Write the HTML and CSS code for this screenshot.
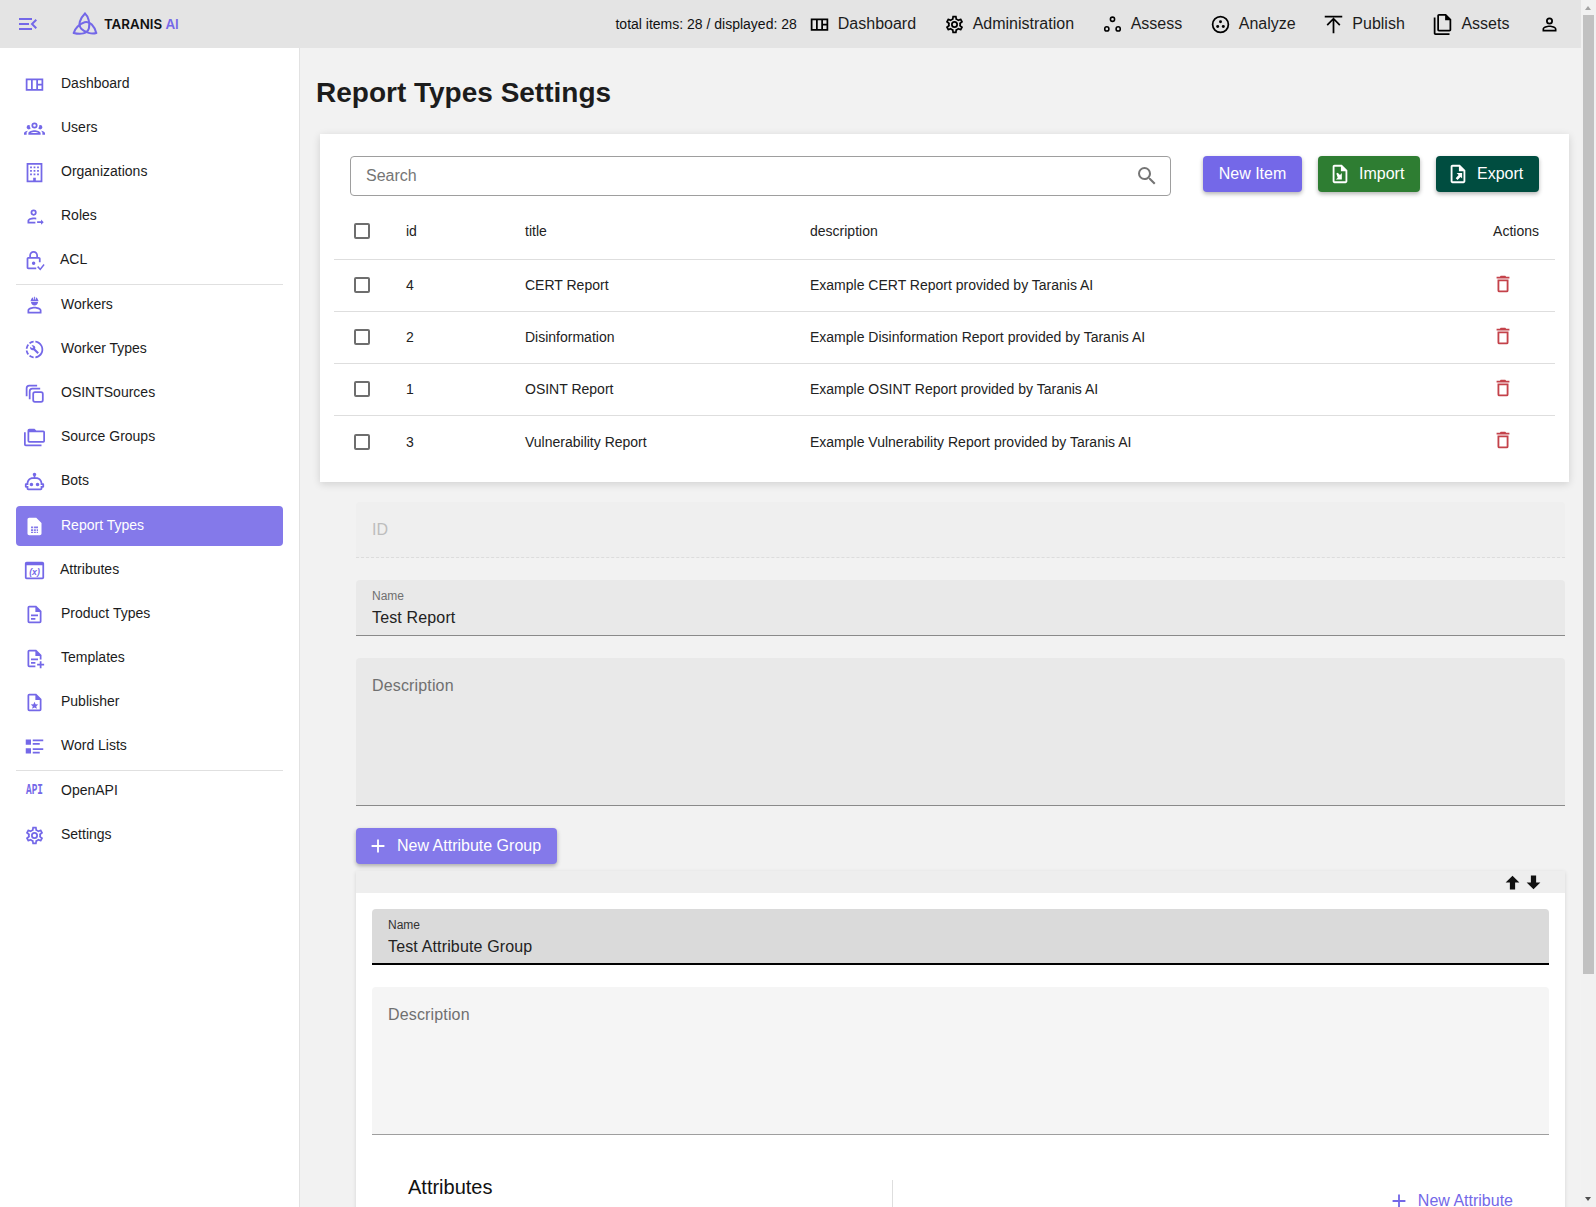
FILE: index.html
```html
<!DOCTYPE html>
<html>
<head>
    <title>Report Types Settings</title>
    <link rel="stylesheet" href="styles.css">
</head>
<body>
    <header class="app-bar">
        <button class="menu-toggle" aria-label="menu">
            <svg viewBox="0 0 24 24" class="icon primary"><path d="M21,15.61L19.59,17L14.58,12L19.59,7L21,8.39L17.44,12L21,15.61M3,6H16V8H3V6M3,13V11H13V13H3M3,18V16H16V18H3Z"/></svg>
        </button>
        <div class="logo">
            <svg viewBox="0 0 26 24" class="logo-mark"><g fill="none" stroke="#7468e8" stroke-width="2" stroke-linecap="round"><path d="M13 1.500C8 6.500 5.500 13 9.500 17C13 20.500 20 22.500 24.260 21"/><path d="M13 1.500C8 6.500 5.500 13 9.500 17C13 20.500 20 22.500 24.260 21" transform="rotate(120 13 14.500)"/><path d="M13 1.500C8 6.500 5.500 13 9.500 17C13 20.500 20 22.500 24.260 21" transform="rotate(240 13 14.500)"/></g></svg>
            <span class="logo-text">TARANIS <span class="logo-ai">AI</span></span>
        </div>
        <div class="bar-spacer"></div>
        <span class="item-count">total items: 28 / displayed: 28</span>
        <nav class="top-nav">
            <a class="top-link"><svg viewBox="0 0 24 24" class="icon"><path d="M2 5H22V19H2V5M4 7V17H8V7H4M10 7V17H14V7H10M16 7V11H20V7H16M16 13V17H20V13H16Z" fill-rule="evenodd"/></svg>Dashboard</a>
            <a class="top-link"><svg viewBox="0 0 24 24" class="icon"><path d="M12,8A4,4 0 0,1 16,12A4,4 0 0,1 12,16A4,4 0 0,1 8,12A4,4 0 0,1 12,8M12,10A2,2 0 0,0 10,12A2,2 0 0,0 12,14A2,2 0 0,0 14,12A2,2 0 0,0 12,10M10,22C9.75,22 9.54,21.82 9.5,21.58L9.13,18.93C8.5,18.68 7.96,18.34 7.44,17.94L4.95,18.95C4.73,19.03 4.46,18.95 4.34,18.73L2.34,15.27C2.21,15.05 2.27,14.78 2.46,14.63L4.57,12.97L4.5,12L4.57,11L2.46,9.37C2.27,9.22 2.21,8.95 2.34,8.73L4.34,5.27C4.46,5.05 4.73,4.96 4.95,5.05L7.44,6.05C7.96,5.66 8.5,5.32 9.13,5.07L9.5,2.42C9.54,2.18 9.75,2 10,2H14C14.25,2 14.46,2.18 14.5,2.42L14.87,5.07C15.5,5.32 16.04,5.66 16.56,6.05L19.05,5.05C19.27,4.96 19.54,5.05 19.66,5.27L21.66,8.73C21.79,8.95 21.73,9.22 21.54,9.37L19.43,11L19.5,12L19.43,13L21.54,14.63C21.73,14.78 21.79,15.05 21.66,15.27L19.66,18.73C19.54,18.95 19.27,19.04 19.05,18.95L16.56,17.95C16.04,18.34 15.5,18.68 14.87,18.93L14.5,21.58C14.46,21.82 14.25,22 14,22H10M11.25,4L10.88,6.61C9.68,6.86 8.62,7.5 7.85,8.39L5.44,7.35L4.69,8.65L6.8,10.2C6.4,11.37 6.4,12.64 6.8,13.8L4.68,15.36L5.43,16.66L7.86,15.62C8.63,16.5 9.68,17.14 10.87,17.38L11.24,20H12.76L13.13,17.39C14.32,17.14 15.37,16.5 16.14,15.62L18.57,16.66L19.32,15.36L17.2,13.81C17.6,12.64 17.6,11.37 17.2,10.2L19.31,8.65L18.56,7.35L16.15,8.39C15.38,7.5 14.32,6.86 13.12,6.62L12.75,4H11.25Z"/></svg>Administration</a>
            <a class="top-link"><svg viewBox="0 0 24 24" class="icon"><g fill="none" stroke="#000" stroke-width="1.800"><circle cx="12" cy="6" r="2.400"/><circle cx="5.500" cy="17" r="2.400"/><circle cx="18.500" cy="17" r="2.400"/></g></svg>Assess</a>
            <a class="top-link"><svg viewBox="0 0 24 24" class="icon"><circle cx="12" cy="12" r="9" fill="none" stroke="#000" stroke-width="2"/><circle cx="12" cy="8.800" r="1.700"/><circle cx="8.800" cy="14.300" r="1.700"/><circle cx="15.200" cy="14.300" r="1.700"/></svg>Analyze</a>
            <a class="top-link"><svg viewBox="0 0 24 24" class="icon"><path d="M4.08,11.92L12,4L19.92,11.92L18.5,13.33L13,7.83V22H11V7.83L5.5,13.33L4.08,11.92M12,4H22V2H2V4H12Z"/></svg>Publish</a>
            <a class="top-link"><svg viewBox="0 0 24 24" class="icon"><path d="M16 0H8C6.9 0 6 .9 6 2V18C6 19.100 6.900 20 8 20H20C21.100 20 22 19.100 22 18V6L16 0M20 18H8V2H15V7H20V18M4 4V22H20V24H4C2.900 24 2 23.100 2 22V4H4Z"/></svg>Assets</a>
            <a class="top-link top-user"><svg viewBox="0 0 24 24" class="icon"><path d="M12,4A4,4 0 0,1 16,8A4,4 0 0,1 12,12A4,4 0 0,1 8,8A4,4 0 0,1 12,4M12,6A2,2 0 0,0 10,8A2,2 0 0,0 12,10A2,2 0 0,0 14,8A2,2 0 0,0 12,6M12,13C14.67,13 20,14.33 20,17V20H4V17C4,14.33 9.33,13 12,13M12,14.9C9.03,14.9 5.9,16.36 5.9,17V18.1H18.1V17C18.1,16.36 14.97,14.9 12,14.9Z"/></svg></a>
        </nav>
    </header>

    <aside class="sidebar">
        <a class="nav-item"><svg viewBox="0 0 24 24" class="icon primary"><path d="M2 5H22V19H2V5M4 7V17H8V7H4M10 7V17H14V7H10M16 7V11H20V7H16M16 13V17H20V13H16Z" fill-rule="evenodd"/></svg><span>Dashboard</span></a>
        <a class="nav-item"><svg viewBox="0 0 24 24" class="icon primary"><path d="M12,5A3.5,3.5 0 0,0 8.5,8.5A3.5,3.5 0 0,0 12,12A3.5,3.5 0 0,0 15.5,8.5A3.5,3.5 0 0,0 12,5M12,7A1.5,1.5 0 0,1 13.5,8.5A1.5,1.5 0 0,1 12,10A1.5,1.5 0 0,1 10.5,8.5A1.5,1.5 0 0,1 12,7M5.5,8A2.5,2.5 0 0,0 3,10.5C3,11.44 3.53,12.25 4.29,12.68C4.65,12.88 5.06,13 5.5,13C5.94,13 6.35,12.88 6.71,12.68C7.08,12.47 7.39,12.17 7.62,11.81C6.89,10.86 6.5,9.7 6.5,8.5C6.5,8.41 6.5,8.31 6.5,8.22C6.2,8.08 5.86,8 5.5,8M18.5,8C18.14,8 17.8,8.08 17.5,8.22C17.5,8.31 17.5,8.41 17.5,8.5C17.5,9.7 17.11,10.86 16.38,11.81C16.5,12 16.63,12.15 16.78,12.3C16.94,12.45 17.11,12.58 17.29,12.68C17.65,12.88 18.06,13 18.5,13C18.94,13 19.35,12.88 19.71,12.68C20.47,12.25 21,11.44 21,10.5A2.5,2.5 0 0,0 18.5,8M12,14C9.66,14 5,15.17 5,17.5V19H19V17.5C19,15.17 14.34,14 12,14M4.71,14.55C2.78,14.78 0,15.76 0,17.5V19H3V17.07C3,16.06 3.69,15.22 4.71,14.55M19.29,14.55C20.31,15.22 21,16.06 21,17.07V19H24V17.5C24,15.76 21.22,14.78 19.29,14.55M12,16C13.53,16 15.24,16.5 16.23,17H7.77C8.76,16.5 10.47,16 12,16Z"/></svg><span>Users</span></a>
        <a class="nav-item"><svg viewBox="0 0 24 24" class="icon primary"><path fill-rule="evenodd" d="M3 1H21V23H3V1M5 3V21H10.500V18H13.500V21H19V3H5M7 5H9V7H7V5M11 5H13V7H11V5M15 5H17V7H15V5M7 9H9V11H7V9M11 9H13V11H11V9M15 9H17V11H15V9M7 13H9V15H7V13M11 13H13V15H11V13M15 13H17V15H15V13Z"/></svg><span>Organizations</span></a>
        <a class="nav-item"><svg viewBox="0 0 24 24" class="icon primary"><path d="M11 4A3.500 3.500 0 1 1 11 11A3.500 3.500 0 1 1 11 4M11 6A1.500 1.500 0 1 0 11 9A1.500 1.500 0 1 0 11 6M11 13C11.900 13 13 13.100 14 13.400V15.400C13 15.100 11.900 15 11 15C8.500 15 6 16 6 16.800V18H13V20H4V16.800C4 14.300 8.500 13 11 13M15 17.500H19.500V15.500L22.500 18.500L19.500 21.500V19.500H15V17.500Z"/></svg><span>Roles</span></a>
        <a class="nav-item nav-tight"><svg viewBox="0 0 24 24" class="icon primary"><path fill-rule="evenodd" d="M11 1C8.200 1 6 3.200 6 6V8H5C3.900 8 3 8.900 3 10V20C3 21.100 3.900 22 5 22H14V20H5V10H17V14H19V10C19 8.900 18.100 8 17 8H16V6C16 3.200 13.800 1 11 1M11 3C12.700 3 14 4.300 14 6V8H8V6C8 4.300 9.300 3 11 3M11 13A2 2 0 1 0 11 17A2 2 0 1 0 11 13M22.300 16L18.500 20.800L16.200 18.400L15 19.600L18.600 23.300L23.600 17.100L22.300 16Z"/></svg><span>ACL</span></a>
        <hr class="nav-divider">
        <a class="nav-item"><svg viewBox="0 0 24 24" class="icon primary"><path d="M12 13.500C9.300 13.500 4 14.800 4 17.500V21H20V17.500C20 14.800 14.700 13.500 12 13.500M18 19H6V17.500C6 16.800 9.200 15.500 12 15.500S18 16.800 18 17.500V19M8 8C8 10.200 9.800 12 12 12S16 10.200 16 8H8M7.500 7H16.500V6H16C16 4.500 15 3.300 13.500 2.700V5H12.500V2H11.500V5H10.500V2.700C9 3.300 8 4.500 8 6H7.500V7Z"/></svg><span>Workers</span></a>
        <a class="nav-item"><svg viewBox="0 0 24 24" class="icon primary"><path d="M13 2.03V4.05C17.39 4.59 20.5 8.58 19.96 12.97C19.5 16.61 16.64 19.5 13 19.93V21.93C18.5 21.38 22.5 16.5 21.95 11C21.5 6.25 17.73 2.5 13 2.03M11 2.06C9.05 2.25 7.19 3 5.67 4.26L7.1 5.74C8.22 4.84 9.57 4.26 11 4.06V2.06M4.26 5.67C3 7.19 2.25 9.04 2.05 11H4.05C4.24 9.58 4.8 8.23 5.69 7.1L4.26 5.67M2.06 13C2.26 14.96 3.03 16.81 4.27 18.33L5.69 16.9C4.81 15.77 4.24 14.42 4.06 13H2.06M7.06 18.37L5.67 19.74C7.18 21 9.04 21.79 11 22V20C9.58 19.82 8.23 19.25 7.1 18.37H7.06M16.82 15.19L12.71 11.08C13.12 10.04 12.89 8.82 12.03 7.97C11.13 7.06 9.78 6.88 8.69 7.38L10.63 9.32L9.28 10.68L7.29 8.73C6.75 9.82 7 11.17 7.88 12.08C8.74 12.94 9.96 13.16 11 12.76L15.11 16.86C15.29 17.05 15.56 17.05 15.74 16.86L16.78 15.83C17 15.65 17 15.33 16.82 15.19Z"/></svg><span>Worker Types</span></a>
        <a class="nav-item"><svg viewBox="0 0 24 24" class="icon primary"><g fill="none" stroke="#7468e8" stroke-width="2"><path d="M3 15V6C3 4.300 4.300 3 6 3H15"/><path d="M6.500 18.500V9.500C6.500 7.800 7.800 6.500 9.500 6.500H18.500"/><rect x="10.500" y="10.500" width="11" height="11" rx="2"/></g></svg><span>OSINTSources</span></a>
        <a class="nav-item"><svg viewBox="0 0 24 24" class="icon primary"><path d="M22,4A2,2 0 0,1 24,6V16A2,2 0 0,1 22,18H6A2,2 0 0,1 4,16V4A2,2 0 0,1 6,2H12L14,4H22M2,6V20H20V22H2A2,2 0 0,1 0,20V11H0V6H2M6,6V16H22V6H6Z"/></svg><span>Source Groups</span></a>
        <a class="nav-item"><svg viewBox="0 0 24 24" class="icon primary"><path d="M17.500 15.500C17.500 16.610 16.610 17.500 15.500 17.500S13.500 16.610 13.500 15.500 14.400 13.500 15.500 13.500 17.500 14.400 17.500 15.500M8.500 13.500C7.400 13.500 6.500 14.400 6.500 15.500S7.400 17.500 8.500 17.500 10.500 16.610 10.500 15.500 9.610 13.500 8.500 13.500M23 15V18C23 18.550 22.550 19 22 19H21V20C21 21.110 20.110 22 19 22H5C3.900 22 3 21.110 3 20V19H2C1.450 19 1 18.550 1 18V15C1 14.450 1.450 14 2 14H3C3 10.130 6.130 7 10 7H11V5.730C10.400 5.390 10 4.740 10 4C10 2.900 10.900 2 12 2S14 2.900 14 4C14 4.740 13.600 5.390 13 5.730V7H14C17.870 7 21 10.130 21 14H22C22.550 14 23 14.450 23 15M21 16H19V14C19 11.240 16.760 9 14 9H10C7.240 9 5 11.240 5 14V16H3V17H5V20H19V17H21V16Z"/></svg><span>Bots</span></a>
        <a class="nav-item active"><svg viewBox="0 0 24 24" class="icon"><path fill="#fff" fill-rule="evenodd" d="M6 2H14L20 8V20C20 21.100 19.100 22 18 22H6C4.900 22 4 21.100 4 20V4C4 2.900 4.900 2 6 2M8 12V14H10.500V12H8M11.500 12V14H16V12H11.500M8 15V17H10.500V15H8M11.500 15V17H13.500V15H11.500M14.500 15V17H16V15H14.500M8 18V19.500H10.500V18H8M11.500 18V19.500H13.500V18H11.500M14.500 18V19.500H16V18H14.500Z"/></svg><span>Report Types</span></a>
        <a class="nav-item nav-tight"><svg viewBox="0 0 24 24" class="icon primary"><path fill-rule="evenodd" d="M3 2H21C22 2 23 3 23 4V20C23 21 22 22 21 22H3C2 22 1 21 1 20V4C1 3 2 2 3 2M3 6V20H21V6H3Z"/><text x="12" y="17" class="var-text">(x)</text></svg><span>Attributes</span></a>
        <a class="nav-item"><svg viewBox="0 0 24 24" class="icon primary"><path d="M6,2A2,2 0 0,0 4,4V20A2,2 0 0,0 6,22H18A2,2 0 0,0 20,20V8L14,2H6M6,4H13V9H18V20H6V4M8,12V14H16V12H8M8,16V18H13V16H8Z"/></svg><span>Product Types</span></a>
        <a class="nav-item"><svg viewBox="0 0 24 24" class="icon primary"><path d="M6,2A2,2 0 0,0 4,4V20A2,2 0 0,0 6,22H13V20H6V4H13V9H18V13H20V8L14,2H6M8,12V14H16V12H8M8,16V18H13V16H8M18,15V18H15V20H18V23H20V20H23V18H20V15H18Z"/></svg><span>Templates</span></a>
        <a class="nav-item"><svg viewBox="0 0 24 24" class="icon primary"><path d="M6,2A2,2 0 0,0 4,4V20A2,2 0 0,0 6,22H18A2,2 0 0,0 20,20V8L14,2H6M6,4H13V9H18V20H6V4M12,11L13.200,13.900L16.300,14.200L14,16.200L14.700,19.200L12,17.600L9.300,19.200L10,16.200L7.700,14.200L10.800,13.900L12,11Z"/></svg><span>Publisher</span></a>
        <a class="nav-item"><svg viewBox="0 0 24 24" class="icon primary"><path d="M2 4H8V10H2V4M2 14H8V20H2V14M10 4H22V6H10V4M10 8H18V10H10V8M10 14H22V16H10V14M10 18H18V20H10V18Z"/></svg><span>Word Lists</span></a>
        <hr class="nav-divider">
        <a class="nav-item"><b class="api-icon">API</b><span>OpenAPI</span></a>
        <a class="nav-item"><svg viewBox="0 0 24 24" class="icon primary"><path d="M12,8A4,4 0 0,1 16,12A4,4 0 0,1 12,16A4,4 0 0,1 8,12A4,4 0 0,1 12,8M12,10A2,2 0 0,0 10,12A2,2 0 0,0 12,14A2,2 0 0,0 14,12A2,2 0 0,0 12,10M10,22C9.75,22 9.54,21.82 9.5,21.58L9.13,18.93C8.5,18.68 7.96,18.34 7.44,17.94L4.95,18.95C4.73,19.03 4.46,18.95 4.34,18.73L2.34,15.27C2.21,15.05 2.27,14.78 2.46,14.63L4.57,12.97L4.5,12L4.57,11L2.46,9.37C2.27,9.22 2.21,8.95 2.34,8.73L4.34,5.27C4.46,5.05 4.73,4.96 4.95,5.05L7.44,6.05C7.96,5.66 8.5,5.32 9.13,5.07L9.5,2.42C9.54,2.18 9.75,2 10,2H14C14.25,2 14.46,2.18 14.5,2.42L14.87,5.07C15.5,5.32 16.04,5.66 16.56,6.05L19.05,5.05C19.27,4.96 19.54,5.05 19.66,5.27L21.66,8.73C21.79,8.95 21.73,9.22 21.54,9.37L19.43,11L19.5,12L19.43,13L21.54,14.63C21.73,14.78 21.79,15.05 21.66,15.27L19.66,18.73C19.54,18.95 19.27,19.04 19.05,18.95L16.56,17.95C16.04,18.34 15.5,18.68 14.87,18.93L14.5,21.58C14.46,21.82 14.25,22 14,22H10M11.25,4L10.88,6.61C9.68,6.86 8.62,7.5 7.85,8.39L5.44,7.35L4.69,8.65L6.8,10.2C6.4,11.37 6.4,12.64 6.8,13.8L4.68,15.36L5.43,16.66L7.86,15.62C8.63,16.5 9.68,17.14 10.87,17.38L11.24,20H12.76L13.13,17.39C14.32,17.14 15.37,16.5 16.14,15.62L18.57,16.66L19.32,15.36L17.2,13.81C17.6,12.64 17.6,11.37 17.2,10.2L19.31,8.65L18.56,7.35L16.15,8.39C15.38,7.5 14.32,6.86 13.12,6.62L12.75,4H11.25Z"/></svg><span>Settings</span></a>
    </aside>

    <main class="content">
        <h1 class="page-title">Report Types Settings</h1>

        <section class="table-card">
            <div class="toolbar">
                <div class="search">
                    <span class="search-text">Search</span>
                    <svg viewBox="0 0 24 24" class="icon search-icon"><path d="M9.5,3A6.5,6.5 0 0,1 16,9.5C16,11.11 15.41,12.59 14.44,13.73L14.71,14H15.5L20.5,19L19,20.5L14,15.5V14.71L13.73,14.44C12.59,15.41 11.11,16 9.5,16A6.5,6.5 0 0,1 3,9.5A6.5,6.5 0 0,1 9.5,3M9.5,5C7,5 5,7 5,9.5C5,12 7,14 9.5,14C12,14 14,12 14,9.5C14,7 12,5 9.5,5Z"/></svg>
                </div>
                <button class="btn btn-primary btn-new">New Item</button>
                <button class="btn btn-file btn-import"><svg viewBox="0 0 24 24" class="btn-icon"><path fill="#fff" fill-rule="evenodd" d="M6 2H14L20 8V20C20 21.100 19.100 22 18 22H6C4.900 22 4 21.100 4 20V4C4 2.900 4.900 2 6 2M6 4V20H18V9H13V4H6M8 11.500L9.500 10.500L12 13L14 11V18H7.500L9.500 16L8 11.500Z"/></svg>Import</button>
                <button class="btn btn-file btn-export"><svg viewBox="0 0 24 24" class="btn-icon"><path fill="#fff" fill-rule="evenodd" d="M6 2H14L20 8V20C20 21.100 19.100 22 18 22H6C4.900 22 4 21.100 4 20V4C4 2.900 4.900 2 6 2M6 4V20H18V9H13V4H6M10.500 11H16.500V17L14.800 15.300L11.500 18.500L9.500 16.500L12.700 13.200L10.500 11Z"/></svg>Export</button>
            </div>
            <table class="data-table">
                <thead>
                    <tr>
                        <th class="col-check"><span class="checkbox"></span></th>
                        <th class="col-id">id</th>
                        <th class="col-title">title</th>
                        <th>description</th>
                        <th class="col-actions">Actions</th>
                    </tr>
                </thead>
                <tbody>
                    <tr>
                        <td class="col-check"><span class="checkbox"></span></td>
                        <td>4</td>
                        <td>CERT Report</td>
                        <td>Example CERT Report provided by Taranis AI</td>
                        <td class="col-actions"><svg viewBox="0 0 24 24" class="trash"><path d="M6,19A2,2 0 0,0 8,21H16A2,2 0 0,0 18,19V7H6V19M8,9H16V19H8V9M15.5,4L14.5,3H9.5L8.5,4H5V6H19V4H15.5Z"/></svg></td>
                    </tr>
                    <tr>
                        <td class="col-check"><span class="checkbox"></span></td>
                        <td>2</td>
                        <td>Disinformation</td>
                        <td>Example Disinformation Report provided by Taranis AI</td>
                        <td class="col-actions"><svg viewBox="0 0 24 24" class="trash"><path d="M6,19A2,2 0 0,0 8,21H16A2,2 0 0,0 18,19V7H6V19M8,9H16V19H8V9M15.5,4L14.5,3H9.5L8.5,4H5V6H19V4H15.5Z"/></svg></td>
                    </tr>
                    <tr>
                        <td class="col-check"><span class="checkbox"></span></td>
                        <td>1</td>
                        <td>OSINT Report</td>
                        <td>Example OSINT Report provided by Taranis AI</td>
                        <td class="col-actions"><svg viewBox="0 0 24 24" class="trash"><path d="M6,19A2,2 0 0,0 8,21H16A2,2 0 0,0 18,19V7H6V19M8,9H16V19H8V9M15.5,4L14.5,3H9.5L8.5,4H5V6H19V4H15.5Z"/></svg></td>
                    </tr>
                    <tr>
                        <td class="col-check"><span class="checkbox"></span></td>
                        <td>3</td>
                        <td>Vulnerability Report</td>
                        <td>Example Vulnerability Report provided by Taranis AI</td>
                        <td class="col-actions"><svg viewBox="0 0 24 24" class="trash"><path d="M6,19A2,2 0 0,0 8,21H16A2,2 0 0,0 18,19V7H6V19M8,9H16V19H8V9M15.5,4L14.5,3H9.5L8.5,4H5V6H19V4H15.5Z"/></svg></td>
                    </tr>
                </tbody>
            </table>
        </section>

        <form class="edit-form">
            <div class="field field-disabled"><span class="field-placeholder">ID</span></div>
            <div class="field">
                <span class="field-label">Name</span>
                <span class="field-value">Test Report</span>
            </div>
            <div class="field field-area"><span class="field-placeholder">Description</span></div>

            <button type="button" class="btn btn-group-add"><svg viewBox="0 0 24 24" class="btn-icon"><path fill="#fff" d="M19,13H13V19H11V13H5V11H11V5H13V11H19V13Z"/></svg>New Attribute Group</button>

            <div class="group-card">
                <div class="group-head">
                    <svg viewBox="0 0 24 24" class="arrow"><path d="M15,20H9V12H4.160L12,4.160L19.840,12H15V20Z"/></svg>
                    <svg viewBox="0 0 24 24" class="arrow"><path d="M9,4H15V12H19.840L12,19.840L4.160,12H9V4Z"/></svg>
                </div>
                <div class="group-body">
                    <div class="field field-focus">
                        <span class="field-label">Name</span>
                        <span class="field-value">Test Attribute Group</span>
                    </div>
                    <div class="field field-area field-light"><span class="field-placeholder">Description</span></div>
                    <div class="attr-row">
                        <h2 class="attr-title">Attributes</h2>
                        <div class="attr-actions">
                            <a class="text-btn"><svg viewBox="0 0 24 24" class="btn-icon"><path fill="#7468e8" d="M19,13H13V19H11V13H5V11H11V5H13V11H19V13Z"/></svg>New Attribute</a>
                        </div>
                    </div>
                </div>
            </div>
        </form>
    </main>

    <div class="scrollbar">
        <span class="scroll-up"></span>
        <div class="scroll-thumb"></div>
        <span class="scroll-down"></span>
    </div>
</body>
</html>
```

FILE: styles.css
```css
* {
    box-sizing: border-box;
}
body {
    margin: 0;
    background-color: #f2f2f2;
    color: #1f1f1f;
    font-family: "Liberation Sans", Arial, sans-serif;
    font-size: 14px;
}
.icon {
    width: 21px;
    height: 21px;
    flex-shrink: 0;
    fill: #000;
}
.icon.primary {
    fill: #7468e8;
}

/* App bar */
.app-bar {
    position: fixed;
    top: 0;
    left: 0;
    right: 15px;
    z-index: 5;
    height: 48px;
    display: flex;
    align-items: center;
    background-color: #e4e4e4;
}
.menu-toggle {
    width: 24px;
    height: 24px;
    margin-left: 16px;
    padding: 0;
    border: 0;
    background: none;
}
.menu-toggle .icon {
    width: 24px;
    height: 24px;
}
.logo {
    display: flex;
    align-items: center;
    margin-left: 32px;
}
.logo-mark {
    width: 26px;
    height: 24px;
}
.logo-text {
    margin-left: 6px;
    font-family: Inter, "Liberation Sans", sans-serif;
    font-size: 13.300px;
    font-weight: 600;
    color: #111;
}
.logo-ai {
    color: #7468e8;
}
.bar-spacer {
    flex-grow: 1;
}
.item-count {
    color: #111;
    font-size: 14px;
    margin-right: 12px;
}
.top-nav {
    display: flex;
    align-items: center;
    gap: 27.600px;
    margin-right: 21px;
}
.top-link {
    display: flex;
    align-items: center;
    gap: 8px;
    height: 48px;
    font-size: 16px;
    color: #1c1c1c;
}
.top-user {
    margin-left: 2px;
}

/* Sidebar */
.sidebar {
    position: fixed;
    top: 48px;
    left: 0;
    bottom: 0;
    width: 300px;
    padding: 16px 16px 0;
    background-color: #fff;
    border-right: 1px solid #e2e2e2;
}
.nav-item {
    display: flex;
    align-items: center;
    gap: 16px;
    height: 40px;
    margin-bottom: 4px;
    padding-left: 8px;
    border-radius: 4px;
    color: #1c1c1c;
    font-size: 14px;
}
.nav-item span {
    padding-bottom: 2px;
}
.nav-tight {
    gap: 15px;
}
.nav-item.active {
    margin-top: 5px;
    background-color: #8479ea;
    color: #fff;
}
.nav-divider {
    height: 1px;
    margin: 0;
    border: 0;
    background-color: #e0e0e0;
}
.var-text {
    font-family: "Liberation Sans", sans-serif;
    font-style: italic;
    font-weight: 700;
    font-size: 10px;
    text-anchor: middle;
    fill: #7468e8;
}
.api-icon {
    flex-shrink: 0;
    width: 23px;
    margin: 0 -1px;
    font-family: "Liberation Mono", monospace;
    font-size: 12.500px;
    font-weight: 700;
    line-height: 14px;
    text-align: center;
    white-space: nowrap;
    color: #7468e8;
    transform: scale(0.75, 1.12);
}

/* Main */
.content {
    margin: 0 15px 0 300px;
    padding: 48px 16px 0;
    min-height: 1481px;
}
.page-title {
    margin: 0;
    padding-top: 29px;
    height: 86px;
    font-size: 28px;
    line-height: 32px;
    font-weight: 700;
    color: #1c1c1c;
}
.table-card {
    margin: 0 -4px 0 4px;
    padding: 22px 14px 0;
    height: 348px;
    background-color: #fff;
    box-shadow: 0 2px 8px rgba(0, 0, 0, 0.14);
}
.toolbar {
    display: flex;
    align-items: flex-start;
    padding: 0 16px;
    height: 47px;
}
.search {
    flex-grow: 1;
    height: 40px;
    display: flex;
    align-items: center;
    justify-content: space-between;
    padding: 0 11px 0 15px;
    margin-right: 32px;
    background-color: #fff;
    border: 1px solid #9e9e9e;
    border-radius: 4px;
    font-size: 16px;
    color: #757575;
}
.search-icon {
    width: 24px;
    height: 24px;
    fill: #757575;
}
.btn {
    display: flex;
    align-items: center;
    justify-content: center;
    height: 36px;
    border: 0;
    border-radius: 4px;
    color: #fff;
    font-family: inherit;
    font-size: 16px;
    box-shadow: 0 2px 4px rgba(0, 0, 0, 0.3);
}
.btn-primary {
    background-color: #7468e8;
}
.btn-new {
    width: 99px;
}
.btn-file {
    justify-content: flex-start;
    padding-left: 11px;
    margin-left: 16px;
}
.btn-import {
    width: 102px;
    background-color: #2e7d32;
}
.btn-export {
    width: 103px;
    background-color: #004d40;
}
.btn-icon {
    width: 22px;
    height: 22px;
    margin-right: 8px;
    flex-shrink: 0;
}
.data-table {
    width: 100%;
    border-collapse: collapse;
    table-layout: fixed;
}
.data-table th,
.data-table td {
    height: 52px;
    padding: 0;
    text-align: left;
    font-weight: 400;
    font-size: 14px;
    color: #222;
}
.data-table th {
    height: 56px;
    padding-top: 1px;
    border-bottom: 1px solid #dedede;
}
.data-table tbody td {
    border-bottom: 1px solid #dedede;
}
.data-table tbody tr:last-child td {
    border-bottom: 0;
}
.data-table tbody tr:last-child td:not(.col-actions) {
    padding-top: 2px;
}
.col-check {
    width: 72px;
    padding-left: 20px !important;
}
.col-id {
    width: 119px;
}
.col-title {
    width: 285px;
}
.col-actions {
    width: 120px;
}
th.col-actions {
    padding-right: 16px !important;
    text-align: right !important;
}
td.col-actions {
    padding-left: 57px !important;
}
.checkbox {
    display: block;
    width: 16px;
    height: 16px;
    border: 2px solid #6e6e6e;
    border-radius: 2px;
}
.trash {
    display: block;
    width: 22px;
    height: 22px;
    margin-top: -3px;
    fill: #c4424a;
}

/* Edit form */
.edit-form {
    margin: 20px 0 0 40px;
}
.field {
    height: 56px;
    margin-bottom: 22px;
    padding: 8px 16px 0;
    background-color: #e9e9e9;
    border-bottom: 1px solid #8a8a8a;
    border-radius: 4px 4px 0 0;
}
.field-label {
    display: block;
    font-size: 12px;
    line-height: 16px;
    color: #707070;
}
.field-value {
    display: block;
    margin-top: 3px;
    font-size: 16px;
    line-height: 22px;
    letter-spacing: 0.15px;
    color: #222;
}
.field-placeholder {
    display: block;
    padding-top: 10px;
    font-size: 16px;
    line-height: 20px;
    letter-spacing: 0.15px;
    color: #707070;
}
.field-disabled {
    background-color: #efefef;
    border-bottom: 1px dashed #dcdcdc;
}
.field-disabled .field-placeholder {
    color: #bdbdbd;
}
.field-area {
    height: 148px;
}
.field-focus {
    background-color: #dadada;
    border-bottom: 2px solid #000;
}
.field-focus .field-label {
    color: #333;
}
.field-light {
    background-color: #f5f5f5;
    border-bottom: 1px solid #9e9e9e;
}
.btn-group-add {
    width: 201px;
    justify-content: flex-start;
    padding-left: 11px;
    background-color: #8479ea;
}
.group-card {
    margin-top: 7px;
    background-color: #fff;
    box-shadow: 0 1px 4px rgba(0, 0, 0, 0.12);
}
.group-head {
    display: flex;
    justify-content: flex-end;
    align-items: center;
    height: 22px;
    padding-right: 21px;
    background-color: #eeeeee;
}
.arrow {
    width: 21px;
    height: 21px;
    fill: #111;
}
.group-body {
    padding: 16px 16px 80px;
}
.attr-row {
    display: flex;
    margin-top: 45px;
}
.attr-title {
    width: 521px;
    height: 100px;
    margin: 0;
    padding: 0 0 0 36px;
    font-size: 20px;
    line-height: 15px;
    font-weight: 400;
    color: #111;
    border-right: 1px solid #dedede;
}
.attr-actions {
    flex-grow: 1;
    display: flex;
    justify-content: flex-end;
    padding: 9px 36px 0 0;
}
.text-btn {
    display: flex;
    align-items: center;
    height: 24px;
    color: #7468e8;
    font-size: 16px;
}

/* Window scrollbar as it shows in the capture */
.scrollbar {
    position: fixed;
    top: 0;
    right: 0;
    bottom: 0;
    z-index: 6;
    width: 15px;
    background-color: #f1f1f1;
}
.scroll-thumb {
    position: absolute;
    top: 15px;
    left: 2px;
    width: 11px;
    height: 959px;
    background-color: #c1c1c1;
}
.scroll-up,
.scroll-down {
    position: absolute;
    left: 4px;
    width: 0;
    height: 0;
    border-left: 3.500px solid transparent;
    border-right: 3.500px solid transparent;
}
.scroll-up {
    top: 6px;
    border-bottom: 4px solid #a3a3a3;
}
.scroll-down {
    bottom: 6px;
    border-top: 4px solid #505050;
}
```
